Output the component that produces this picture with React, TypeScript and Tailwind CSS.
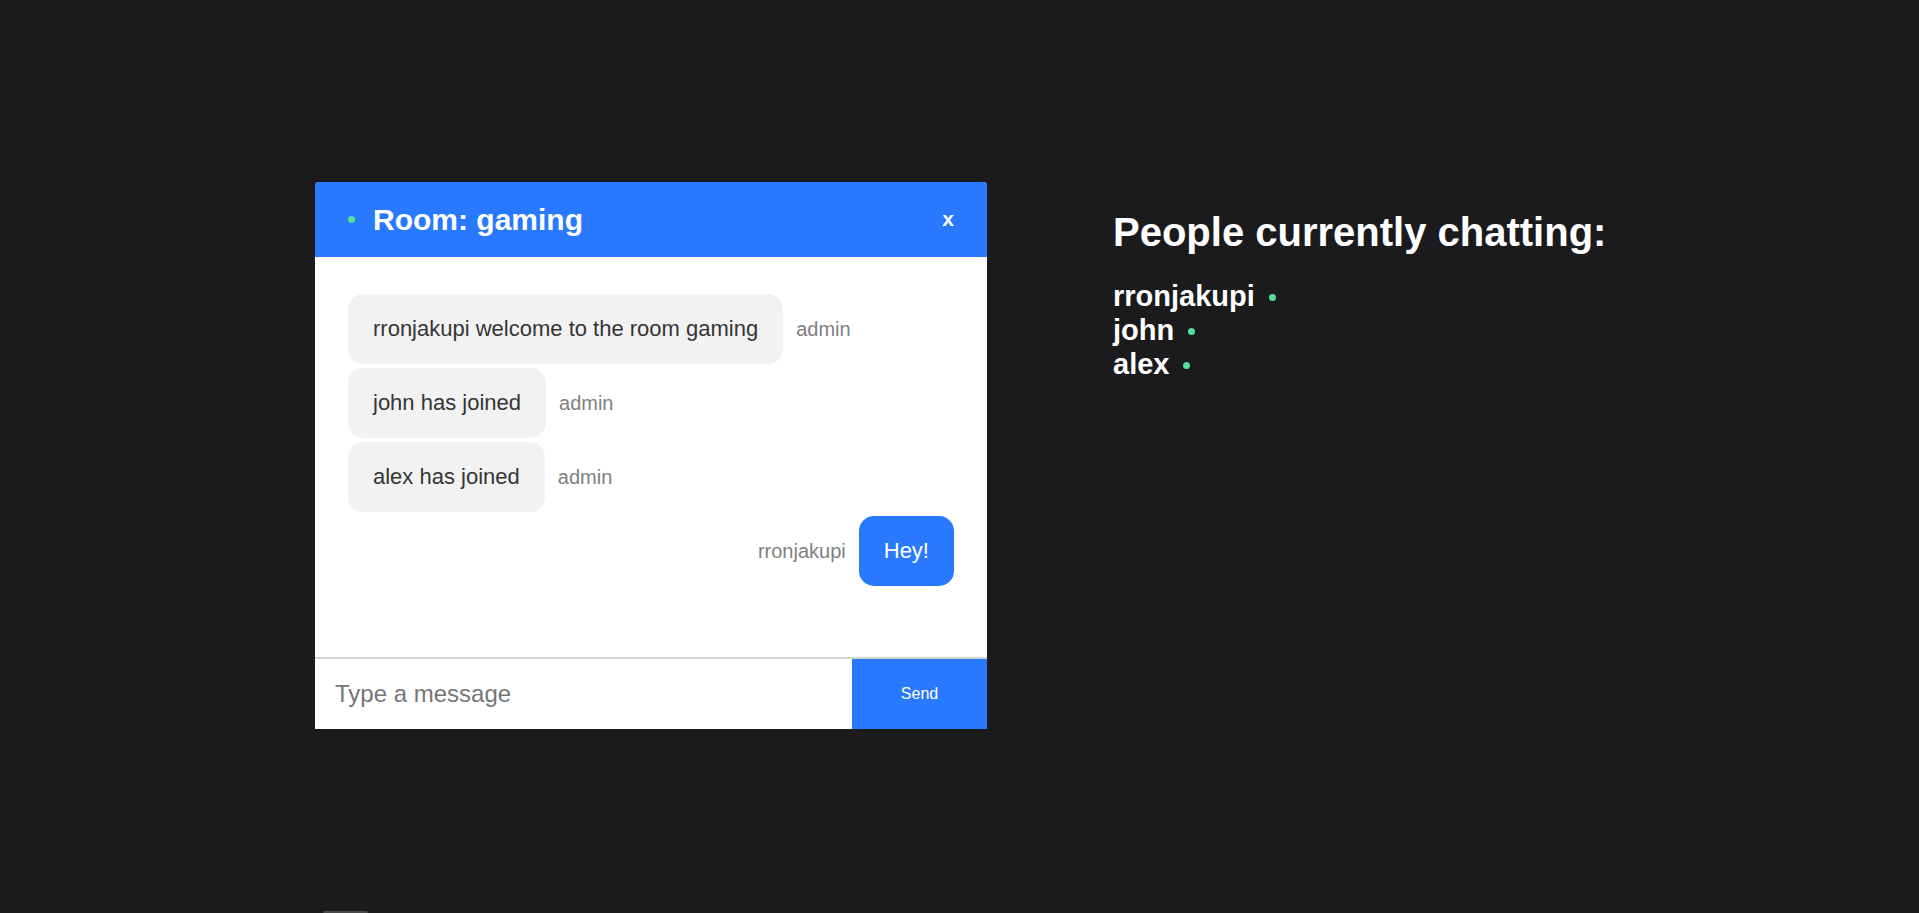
import React from "react"

type Message = { text: string; author: string; mine?: boolean }

const messages: Message[] = [
  { text: "rronjakupi welcome to the room gaming", author: "admin" },
  { text: "john has joined", author: "admin" },
  { text: "alex has joined", author: "admin" },
  { text: "Hey!", author: "rronjakupi", mine: true },
]

const people = ["rronjakupi", "john", "alex"]

function ChatBox() {
  return (
    <div className="w-[672px] flex flex-col bg-white rounded-t-[4px] overflow-hidden">
      {/* Cabeçalho */}
      <div className="h-[75px] flex items-center justify-between bg-[#2979ff] px-[33px]">
        <div className="flex items-center">
          <span className="w-[7px] h-[7px] rounded-full bg-[#55dd99]" />
          <h2 className="ml-[18px] text-[30px] font-bold text-white leading-none">Room: gaming</h2>
        </div>
        <button className="text-white text-[21px] font-bold leading-none pb-[2px]">x</button>
      </div>

      {/* Mensagens */}
      <div className="h-[400px] flex flex-col gap-[4px] px-[33px] pt-[37px]">
        {messages.map((m, i) =>
          m.mine ? (
            <div key={i} className="flex items-center justify-end gap-[13px]">
              <span className="text-[20px] text-[#808080]">{m.author}</span>
              <div className="bg-[#2979ff] text-white text-[22px] leading-[30px] px-[25px] py-[20px] rounded-[15px]">
                {m.text}
              </div>
            </div>
          ) : (
            <div key={i} className="flex items-center gap-[13px]">
              <div className="bg-[#f2f2f2] text-[#353535] text-[22px] leading-[30px] px-[25px] py-[20px] rounded-[15px]">
                {m.text}
              </div>
              <span className="text-[20px] text-[#808080]">{m.author}</span>
            </div>
          )
        )}
      </div>

      {/* Entrada */}
      <div className="flex h-[72px] border-t-2 border-[#d3d3d3]">
        <input
          className="flex-1 px-[20px] text-[24px] text-[#333] placeholder:text-[#757575] outline-none bg-white"
          placeholder="Type a message"
        />
        <button className="w-[135px] bg-[#2979ff] text-white text-[16px]">Send</button>
      </div>
    </div>
  )
}

function PeopleList() {
  return (
    <div className="w-[491px] text-white">
      <h1 className="mt-[27px] text-[40px] font-bold leading-[46px] whitespace-nowrap">People currently chatting:</h1>
      <ul className="mt-[24px]">
        {people.map((p) => (
          <li key={p} className="flex items-center text-[29px] font-bold leading-[34px]">
            <span>{p}</span>
            <span className="ml-[14px] mt-[2px] w-[7px] h-[7px] rounded-full bg-[#55dd99]" />
          </li>
        ))}
      </ul>
    </div>
  )
}

export default function App() {
  return (
    <div className="bg-[#1b1b1d] min-h-screen overflow-hidden" style={{ fontFamily: '"Liberation Sans", Arial, sans-serif' }}>
      <div className="h-[911px] flex items-center justify-center">
        <div className="flex items-start gap-[126px]">
          <ChatBox />
          <PeopleList />
        </div>
      </div>
      <div className="ml-[323px] w-[45px] h-[20px] bg-[#4a4a4a] rounded-t-[2px]" />
    </div>
  )
}
